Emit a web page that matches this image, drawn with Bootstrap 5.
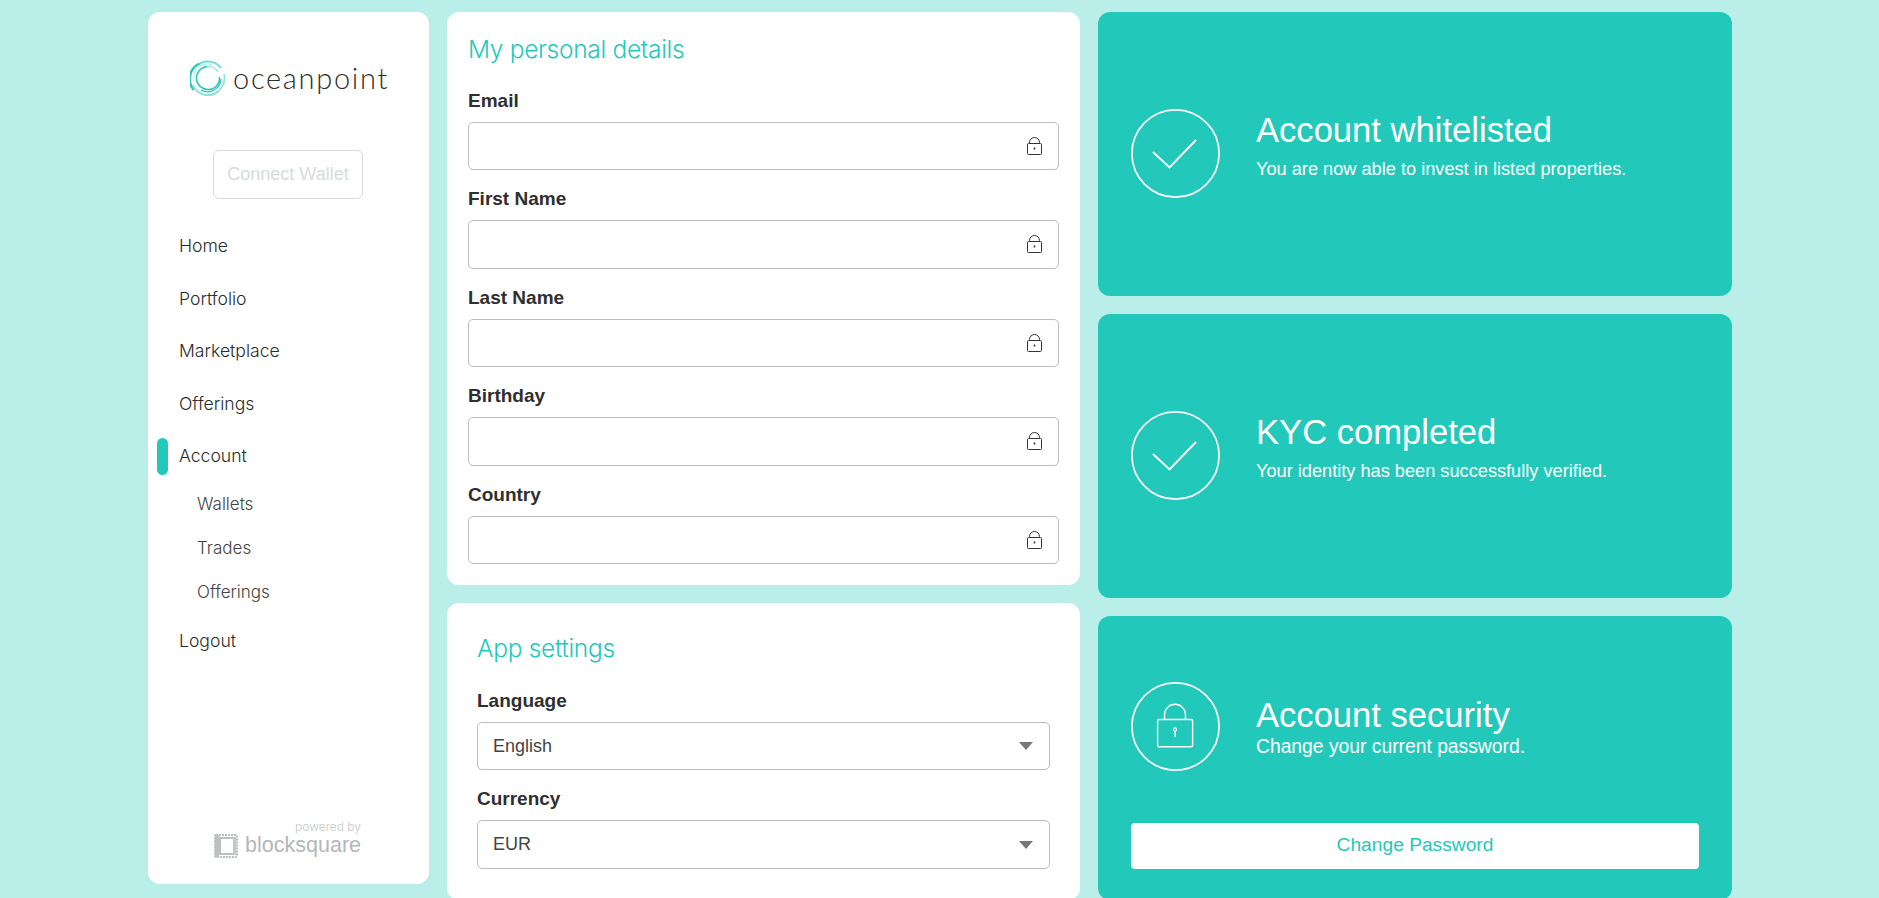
<!DOCTYPE html>
<html lang="en">
<head>
<meta charset="utf-8">
<title>Oceanpoint account</title>
<link href="https://cdn.jsdelivr.net/npm/bootstrap@5.3.0/dist/css/bootstrap.min.css" rel="stylesheet">
<style>
html,body{height:100%;overflow:hidden}
body{background:#baeee8;font-family:"Liberation Sans",Arial,sans-serif;color:#2b2b2b}
.shell{width:1583px;margin:0 auto;padding-top:12px;gap:18px}
.panel{border:0;border-radius:12px;background:#fff}
.side{width:281px;height:872px;flex:none;padding:48px 0 26px}
.midcol{width:633px;flex:none;gap:18px}
.rightcol{width:634px;flex:none;gap:18px}
.brand{gap:7px;height:36px;padding-left:42px}
.brandname{font-family:Lato,sans-serif;font-weight:300;font-size:29px;letter-spacing:1.7px;color:#2e2e2e;line-height:36px}
.connect{width:150px;height:49px;margin:54px 0 0 65px;border:1px solid #d8dcdc;border-radius:6px;color:#d6dcdb;font-size:18px;padding:0;background:#fff;line-height:47px}
.connect:disabled{opacity:1;color:#d6dcdb;border-color:#d8dcdc;background:#fff}
.menu{margin-top:21px;font-family:Inter,"Liberation Sans",sans-serif;font-weight:300}
.menu a{display:flex;align-items:center;color:#2b2b2b;font-size:17.6px;height:52.6px;padding-left:31px;text-decoration:none;position:relative}
.menu a.sub{height:44px;padding-left:49px;font-size:17px;color:#444}
.menu a.active::before{content:"";position:absolute;left:9px;top:8px;width:11px;height:37px;border-radius:5.5px;background:#22c9ba}
.powered{margin-top:auto;padding-right:68px;text-align:right;line-height:1;font-family:Inter,"Liberation Sans",sans-serif;font-weight:300}
.poweredby{font-size:12px;color:#c4c8c8;margin-bottom:0}
.bsq{gap:7px;font-size:21.5px;color:#b4b8b8;height:25px;line-height:25px;font-family:"Liberation Sans",sans-serif}
.details{padding:17px 21px 21px}
.settings{padding:25px 30px 0 30px;height:297px}
.heading{color:#22c9ba;font-size:24.5px;line-height:40px;margin:0;font-family:Inter,"Liberation Sans",sans-serif;font-weight:300;letter-spacing:-.3px}
.details .heading{margin-bottom:20px}
.settings .heading{margin-bottom:21px}
.field{margin-bottom:17px}
.field:last-child{margin-bottom:0}
.field label{display:block;font-size:19px;font-weight:700;line-height:24px;margin-bottom:9px;color:#2f2f2f}
.form-control,.form-select{height:48.4px;border:1px solid #bdbdbd;border-radius:5px;font-size:18px;color:#444;box-shadow:none}
.form-select{padding-left:15px;background-image:url("data:image/svg+xml,%3Csvg xmlns='http://www.w3.org/2000/svg' width='14' height='8'%3E%3Cpath d='M0 0h14L7 8z' fill='%23777'/%3E%3C/svg%3E");background-size:14px 8px;background-position:right 16px center}
.lockicon{position:absolute;right:17px;top:15px;width:15px;height:18px}
.stat{border:0;border-radius:12px;background:#22c9ba;color:#fff;height:284px;padding:0 33px}
.statbody{gap:36px}
.stat .circle{width:89px;height:89px;flex:none}
.stat h2{font-size:34.6px;font-weight:400;line-height:40px;margin:0}
.stat p{font-size:18.2px;line-height:24px;margin:0}
.s1{padding-top:97px}
.s1 .txt{padding-top:1px}
.s1 p{margin-top:7px}
.s3{padding-top:66px}
.s3 .txt{padding-top:13px}
.s3 p{margin-top:0;font-size:19.3px}
.changebtn{margin-top:52px;height:45.6px;width:100%;background:#fff;color:#22c9ba;border:0;border-radius:4px;font-size:19.2px;padding:0}
.changebtn:hover{background:#fff;color:#22c9ba}
</style>
</head>
<body>
<div class="shell d-flex align-items-start">
  <aside class="card panel side d-flex flex-column">
    <div class="brand d-flex align-items-center">
      <svg width="36" height="36" viewBox="0 0 36 36" fill="none" aria-hidden="true">
        <path d="M7 5.5A16.6 16.6 0 0 1 31 8" stroke="#6edccf" stroke-width="1.8"/>
        <path d="M9 3.8A16.8 16.8 0 0 0 4 30" stroke="#22c9ba" stroke-width="2.4"/>
        <path d="M2.8 25A16.8 16.8 0 0 0 28 32" stroke="#8fe3da" stroke-width="2"/>
        <path d="M18 34.6A16.6 16.6 0 0 0 34 14" stroke="#8fe3da" stroke-width="1.6"/>
        <path d="M4 17A14 14 0 0 1 22 4.6" stroke="#a8eae2" stroke-width="1"/>
        <path d="M29.5 17A11.5 11.5 0 1 1 17 6.6" stroke="#22c9ba" stroke-width="1.5"/>
        <path d="M17 6.6A11.5 11.5 0 0 1 28 12" stroke="#8fe3da" stroke-width="1.2"/>
        <path d="M31 19A13.5 13.5 0 0 1 11 30" stroke="#22c9ba" stroke-width="1.3"/>
      </svg>
      <span class="brandname">oceanpoint</span>
    </div>
    <button class="btn connect" disabled>Connect Wallet</button>
    <nav class="menu">
      <a href="#">Home</a>
      <a href="#">Portfolio</a>
      <a href="#">Marketplace</a>
      <a href="#">Offerings</a>
      <a href="#" class="active">Account</a>
      <a href="#" class="sub">Wallets</a>
      <a href="#" class="sub">Trades</a>
      <a href="#" class="sub">Offerings</a>
      <a href="#">Logout</a>
    </nav>
    <div class="powered">
      <div class="poweredby">powered by</div>
      <div class="bsq d-flex justify-content-end align-items-center">
        <svg width="24" height="24" viewBox="0 0 24 24" fill="none" aria-hidden="true">
          <rect x="1" y="1" width="22" height="22" rx="1" stroke="#b9bdbd" stroke-width="2" stroke-dasharray="2 1"/>
          <rect x="1" y="1" width="4" height="22" fill="#bcc0c0"/>
          <rect x="6" y="4" width="14" height="16" stroke="#bcc0c0" stroke-width="2"/>
          <rect x="19" y="3" width="3" height="18" fill="#c4c8c8"/>
        </svg>
        <span>blocksquare</span>
      </div>
    </div>
  </aside>

  <main class="midcol d-flex flex-column">
    <section class="card panel details">
      <h1 class="heading">My personal details</h1>
      <div class="field"><label>Email</label><div class="position-relative"><input class="form-control" readonly><svg class="lockicon" viewBox="0 0 15 18" fill="none" stroke="#333" aria-hidden="true"><rect x=".5" y="6.5" width="14" height="11" rx="1"/><path d="M2.5 6.5V5.5a5 5 0 0 1 10 0v1"/><path d="M7.5 10.5v2" stroke-width="1.6"/></svg></div></div>
      <div class="field"><label>First Name</label><div class="position-relative"><input class="form-control" readonly><svg class="lockicon" viewBox="0 0 15 18" fill="none" stroke="#333" aria-hidden="true"><rect x=".5" y="6.5" width="14" height="11" rx="1"/><path d="M2.5 6.5V5.5a5 5 0 0 1 10 0v1"/><path d="M7.5 10.5v2" stroke-width="1.6"/></svg></div></div>
      <div class="field"><label>Last Name</label><div class="position-relative"><input class="form-control" readonly><svg class="lockicon" viewBox="0 0 15 18" fill="none" stroke="#333" aria-hidden="true"><rect x=".5" y="6.5" width="14" height="11" rx="1"/><path d="M2.5 6.5V5.5a5 5 0 0 1 10 0v1"/><path d="M7.5 10.5v2" stroke-width="1.6"/></svg></div></div>
      <div class="field"><label>Birthday</label><div class="position-relative"><input class="form-control" readonly><svg class="lockicon" viewBox="0 0 15 18" fill="none" stroke="#333" aria-hidden="true"><rect x=".5" y="6.5" width="14" height="11" rx="1"/><path d="M2.5 6.5V5.5a5 5 0 0 1 10 0v1"/><path d="M7.5 10.5v2" stroke-width="1.6"/></svg></div></div>
      <div class="field"><label>Country</label><div class="position-relative"><input class="form-control" readonly><svg class="lockicon" viewBox="0 0 15 18" fill="none" stroke="#333" aria-hidden="true"><rect x=".5" y="6.5" width="14" height="11" rx="1"/><path d="M2.5 6.5V5.5a5 5 0 0 1 10 0v1"/><path d="M7.5 10.5v2" stroke-width="1.6"/></svg></div></div>
    </section>
    <section class="card panel settings">
      <h2 class="heading">App settings</h2>
      <div class="field"><label>Language</label><select class="form-select"><option>English</option></select></div>
      <div class="field"><label>Currency</label><select class="form-select"><option>EUR</option></select></div>
    </section>
  </main>

  <div class="rightcol d-flex flex-column">
    <section class="card stat s1">
      <div class="statbody d-flex">
        <svg class="circle" viewBox="0 0 89 89" fill="none" stroke="#fff" stroke-width="1.7" aria-hidden="true"><circle cx="44.5" cy="44.5" r="43.6"/><path d="M22 43l16.5 15.5L65 31" stroke-width="1.9"/></svg>
        <div class="txt"><h2>Account whitelisted</h2><p>You are now able to invest in listed properties.</p></div>
      </div>
    </section>
    <section class="card stat s1">
      <div class="statbody d-flex">
        <svg class="circle" viewBox="0 0 89 89" fill="none" stroke="#fff" stroke-width="1.7" aria-hidden="true"><circle cx="44.5" cy="44.5" r="43.6"/><path d="M22 43l16.5 15.5L65 31" stroke-width="1.9"/></svg>
        <div class="txt"><h2>KYC completed</h2><p>Your identity has been successfully verified.</p></div>
      </div>
    </section>
    <section class="card stat s3">
      <div class="statbody d-flex">
        <svg class="circle" viewBox="0 0 89 89" fill="none" stroke="#fff" stroke-width="1.7" aria-hidden="true"><circle cx="44.5" cy="44.5" r="43.6"/><rect x="26.6" y="37.5" width="35" height="27.3" rx="1.5" stroke-width="1.4"/><path d="M33.5 37.5v-4.7a10.5 10.5 0 0 1 21 0v4.7" stroke-width="1.4"/><circle cx="44" cy="47.5" r="1.6" stroke-width="1.1"/><path d="M44 49v6" stroke-width="1.4"/></svg>
        <div class="txt"><h2>Account security</h2><p>Change your current password.</p></div>
      </div>
      <button class="btn changebtn">Change Password</button>
    </section>
  </div>
</div>
</body>
</html>
